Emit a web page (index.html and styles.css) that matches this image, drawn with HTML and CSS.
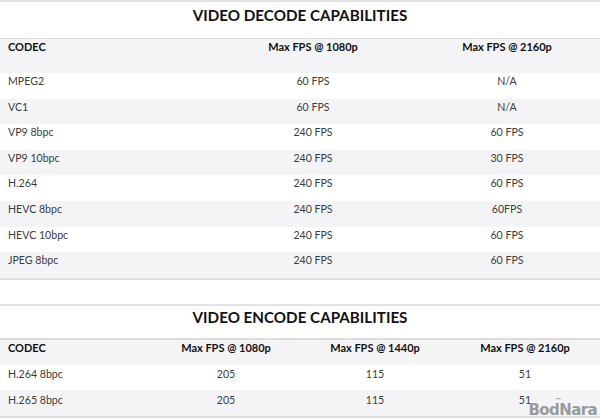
FILE: index.html
```html
<!DOCTYPE html>
<html lang="en">
<head>
<meta charset="utf-8">
<title>Video capabilities</title>
<link rel="stylesheet" href="styles.css">
</head>
<body>
<main class="page">
  <section class="panel panel-decode">
    <h2 class="title">VIDEO DECODE CAPABILITIES</h2>
    <div class="table decode">
      <div class="row head"><span>CODEC</span><span>Max FPS @ 1080p</span><span>Max FPS @ 2160p</span></div>
      <div class="row"><span>MPEG2</span><span>60 FPS</span><span>N/A</span></div>
      <div class="row"><span>VC1</span><span>60 FPS</span><span>N/A</span></div>
      <div class="row"><span>VP9 8bpc</span><span>240 FPS</span><span>60 FPS</span></div>
      <div class="row"><span>VP9 10bpc</span><span>240 FPS</span><span>30 FPS</span></div>
      <div class="row"><span>H.264</span><span>240 FPS</span><span>60 FPS</span></div>
      <div class="row"><span>HEVC 8bpc</span><span>240 FPS</span><span>60FPS</span></div>
      <div class="row"><span>HEVC 10bpc</span><span>240 FPS</span><span>60 FPS</span></div>
      <div class="row"><span>JPEG 8bpc</span><span>240 FPS</span><span>60 FPS</span></div>
    </div>
  </section>
  <section class="panel panel-encode">
    <h2 class="title">VIDEO ENCODE CAPABILITIES</h2>
    <div class="table encode">
      <div class="row head"><span>CODEC</span><span>Max FPS @ 1080p</span><span>Max FPS @ 1440p</span><span>Max FPS @ 2160p</span></div>
      <div class="row"><span>H.264 8bpc</span><span>205</span><span>115</span><span>51</span></div>
      <div class="row"><span>H.265 8bpc</span><span>205</span><span>115</span><span>51</span></div>
    </div>
    <div class="mark">BodNara</div>
  </section>
</main>
</body>
</html>
```

FILE: styles.css
```css
* { box-sizing: border-box; }
html, body { margin: 0; padding: 0; background: #fff; }
.page {
  width: 600px;
  height: 418px;
  overflow: hidden;
  font-family: "Lato", "Liberation Sans", sans-serif;
  font-size: 10.6px;
  color: #3c3c3c;
}
.panel {
  position: relative;
  border-top: 2px solid #e2e2e2;
  border-bottom: 2px solid #dcdcdc;
}
.panel-encode { margin-top: 24px; }
.title {
  margin: 0;
  text-align: center;
  font-size: 15.2px;
  line-height: 22px;
  font-weight: 700;
  color: #111;
}
.panel-decode .title { height: 36px; padding-top: 2px; }
.panel-encode .title { height: 32px; }
.table { border-top: 1px solid #dddddd; }
.encode.table { border-top-width: 2px; }
.row {
  display: grid;
  height: 25.6px;
  align-items: start;
  line-height: 16px;
}
.row > span { text-align: center; }
.row > span:first-child { text-align: left; padding-left: 8px; }
.decode .row { grid-template-columns: 212px 202px 186px; }
.encode .row { grid-template-columns: 152px 148px 150px 150px; }
.encode .row:not(.head) { padding-top: 1.5px; }
.row:nth-child(odd) { background: #f4f4f6; }
.row.head { font-weight: 700; color: #111; font-size: 11px; }
.decode .row.head { height: 34px; }
.encode .row.head { height: 25px; }
.mark {
  position: absolute;
  right: 3px;
  bottom: -3px;
  font-family: "DejaVu Sans", sans-serif;
  font-size: 15px;
  line-height: 18px;
  font-weight: 700;
  color: #9a9a9a;
  letter-spacing: -0.6px;
}
.mark::before {
  content: "";
  position: absolute;
  left: 27px;
  top: -3px;
  width: 5px;
  height: 3px;
  border-top: 1px solid #9a9a9a;
  border-radius: 50%;
}
```
